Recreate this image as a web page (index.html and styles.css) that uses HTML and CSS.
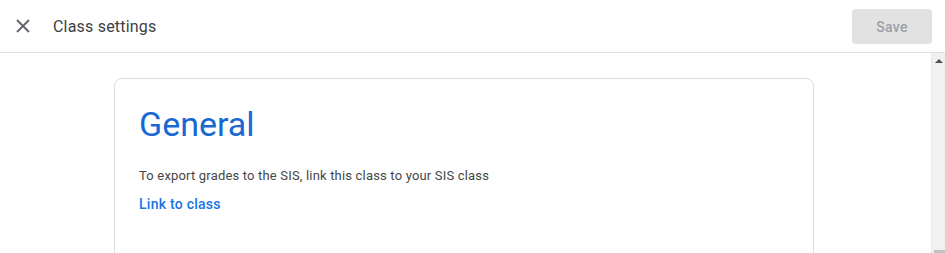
FILE: index.html
```html
<!DOCTYPE html>
<html>
<head>
<meta charset="utf-8">
<link rel="stylesheet" href="styles.css">
</head>
<body>
<header class="topbar">
  <button class="close" aria-label="Close">
    <svg width="14" height="14" viewBox="0 0 14 14"><path d="M1 1L13 13M13 1L1 13" stroke="#5f6368" stroke-width="1.8" fill="none"/></svg>
  </button>
  <h1 class="title">Class settings</h1>
  <button class="save">Save</button>
</header>
<div class="main">
  <div class="content">
    <section class="card">
      <h2 class="card-title">General</h2>
      <p class="desc">To export grades to the SIS, link this class to your SIS class</p>
      <a class="link" href="#">Link to class</a>
    </section>
  </div>
  <div class="scrollbar">
    <div class="arrow"></div>
    <div class="thumb"></div>
  </div>
</div>
</body>
</html>
```
FILE: styles.css
```css
* { box-sizing: border-box; }
html, body { margin: 0; padding: 0; height: 100%; overflow: hidden; background: #fff; }
body { font-family: Roboto, "Liberation Sans", Arial, sans-serif; color: #3c4043; display: flex; flex-direction: column; }
.topbar {
  height: 53px;
  border-bottom: 1px solid #e0e0e0;
  display: flex;
  align-items: center;
  padding: 0 13px 0 9px;
  flex: none;
}
.close {
  width: 28px; height: 28px; border: 0; background: none; padding: 0;
  display: flex; align-items: center; justify-content: center; cursor: pointer;
}
.title {
  margin: 0 0 0 16px;
  font-size: 16px;
  font-weight: 400;
  color: #3c4043;
  letter-spacing: 0.2px;
  flex: 1;
}
.save {
  width: 80px; height: 35px; border: 0; border-radius: 4px;
  background: #e2e2e2; color: #9aa0a6;
  font-family: Roboto, "Liberation Sans", sans-serif; font-size: 14px; font-weight: 500;
  letter-spacing: 0.25px;
  margin-top: 1px;
}
.main { flex: 1; display: flex; min-height: 0; }
.content { flex: 1; padding: 25px 0 0 114px; overflow: hidden; }
.card {
  width: 700px;
  height: 300px;
  border: 1px solid #dadce0;
  border-radius: 8px;
  padding: 20px 24px;
}
.card-title {
  margin: 0;
  font-size: 34px;
  font-weight: 400;
  color: #1967d2;
  line-height: 50px;
}
.desc {
  margin: 17px 0 0;
  font-size: 13px;
  line-height: 20px;
  color: #444746;
  letter-spacing: 0.18px;
}
.link {
  display: inline-block;
  margin-top: 8px;
  font-size: 14px;
  font-weight: 500;
  color: #1a73e8;
  text-decoration: none;
  line-height: 20px;
  letter-spacing: 0.25px;
}
.scrollbar {
  width: 14px; flex: none; background: #f1f1f1; border-left: 1px solid #e8e8e8;
  position: relative;
}
.arrow {
  width: 0; height: 0; margin: 6px auto 0;
  border-left: 4px solid transparent; border-right: 4px solid transparent;
  border-bottom: 4px solid #505050;
}
.thumb {
  position: absolute; left: 2px; right: 0; bottom: 0; height: 3px; background: #c1c1c1;
}
```
